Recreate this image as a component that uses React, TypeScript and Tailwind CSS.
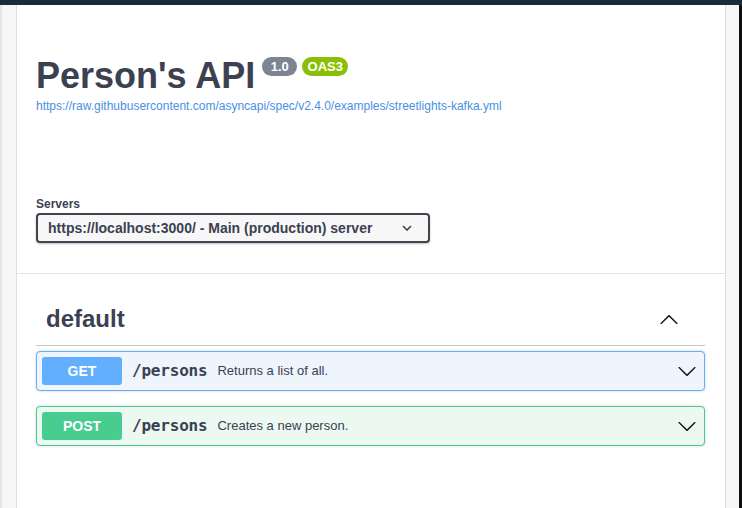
const sans = "font-['Liberation_Sans',Arial,sans-serif]";

function ArrowUp() {
  return (
    <svg width="20" height="20" viewBox="0 0 20 20" className="shrink-0">
      <path
        fill="#1b1b1b"
        d="M17.418 14.908c.272.268.709.268.979 0s.271-.701 0-.969l-7.908-7.83c-.27-.268-.707-.268-.979 0l-7.908 7.83c-.27.268-.27.701 0 .969.271.268.709.268.979 0L10 7.767l7.418 7.141z"
      />
    </svg>
  );
}

function ArrowDown() {
  return (
    <svg width="20" height="20" viewBox="0 0 20 20" className="shrink-0">
      <path
        fill="#1b1b1b"
        d="M17.418 6.109c.272-.268.709-.268.979 0s.271.701 0 .969l-7.908 7.83c-.27.268-.707.268-.979 0l-7.908-7.83c-.27-.268-.27-.701 0-.969.271-.268.709-.268.979 0L10 13.25l7.418-7.141z"
      />
    </svg>
  );
}

type Op = { method: string; path: string; summary: string; row: string; badge: string };

const ops: Op[] = [
  {
    method: "GET",
    path: "/persons",
    summary: "Returns a list of all.",
    row: "border-[#61affe] bg-[#eef5fd]",
    badge: "bg-[#61affe]",
  },
  {
    method: "POST",
    path: "/persons",
    summary: "Creates a new person.",
    row: "border-[#49cc90] bg-[#ecf8f2]",
    badge: "bg-[#49cc90]",
  },
];

function OpRow({ op }: { op: Op }) {
  return (
    <div className={`mb-[15px] flex items-center rounded-[4px] border p-[5px] shadow-[0_0_3px_rgba(0,0,0,0.19)] ${op.row}`}>
      <span className={`flex h-[28px] w-[80px] shrink-0 items-center justify-center rounded-[3px] text-[14px] font-bold text-white ${op.badge}`}>
        {op.method}
      </span>
      <span className="ml-[10px] font-['DejaVu_Sans_Mono',monospace] text-[16px] font-semibold tracking-[-0.2px] text-[#3b4151]">
        {op.path}
      </span>
      <span className="ml-[10px] flex-1 text-[13px] text-[#3b4151]">{op.summary}</span>
      <span className="mr-[2px]">
        <ArrowDown />
      </span>
    </div>
  );
}

export default function App() {
  return (
    <div className={`flex h-[508px] w-[742px] flex-col overflow-hidden bg-white ${sans}`}>
      <div className="h-[5px] bg-[#1b2b3d]" />
      <div className="flex flex-1">
        <div className="w-[17px] border-l-2 border-r border-l-[#e4e4e4] border-r-[#e0e0e0] bg-[#f6f6f6]" />

        <div className="flex-1 bg-white">
          <div className="pl-[19px] pr-[20px] pt-[53px] pb-[30px]">
            <div className="flex items-start">
              <h1 className="text-[36px] font-bold leading-[36px] text-[#3b4151]">Person's API</h1>
              <span className="ml-[7px] -mt-px flex h-[19px] w-[35px] items-center justify-center rounded-full bg-[#7d8492] text-[13px] font-bold text-white">
                1.0
              </span>
              <span className="ml-[5px] -mt-px flex h-[19px] w-[46px] items-center justify-center rounded-full bg-[#89bf04] text-[13px] font-bold text-white">
                OAS3
              </span>
            </div>
            <a className="mt-[4px] block text-[12px] leading-[16px] text-[#4990e2]">
              https://raw.githubusercontent.com/asyncapi/spec/v2.4.0/examples/streetlights-kafka.yml
            </a>

            <div className="mt-[82px] text-[12px] font-bold leading-[16px] text-[#3b4151]">Servers</div>
            <div className="mt-px flex h-[30px] w-[394px] items-center justify-between rounded-[4px] border-2 border-[#41444e] bg-[#f7f7f7] pl-[10px] pr-[16px] shadow-[0_1px_2px_rgba(0,0,0,0.25)]">
              <span className="text-[14px] font-bold text-[#3b4151]">
                https://localhost:3000/ - Main (production) server
              </span>
              <svg width="10" height="6" viewBox="0 0 10 6">
                <path d="M1 1l4 4 4-4" fill="none" stroke="#3b4151" strokeWidth="1.6" />
              </svg>
            </div>
          </div>

          <div className="border-t border-[#e6e6e6] pl-[19px] pr-[20px] pt-[19px]">
            <div className="mb-[5px] flex items-center justify-between border-b border-[#c4c6cb] py-[10px] pl-[10px] pr-[26px]">
              <h3 className="text-[24px] font-bold leading-[32px] text-[#3b4151]">default</h3>
              <ArrowUp />
            </div>
            {ops.map((op) => (
              <OpRow key={op.method} op={op} />
            ))}
          </div>
        </div>

        <div className="w-[14px] border-l border-[#e0e0e0] bg-[#f6f6f6]" />
        <div className="w-[3px] bg-[#0f0f0f]" />
      </div>
    </div>
  );
}
